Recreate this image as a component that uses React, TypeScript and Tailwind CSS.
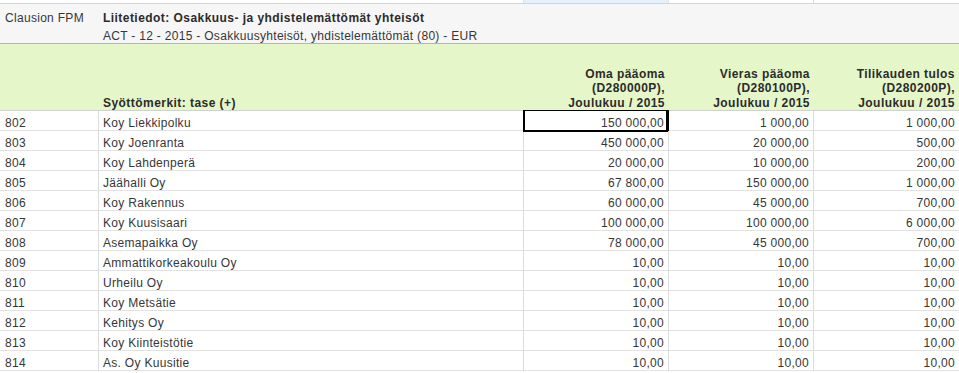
const rows: [string, string, string, string, string][] = [
  ["802", "Koy Liekkipolku", "150 000,00", "1 000,00", "1 000,00"],
  ["803", "Koy Joenranta", "450 000,00", "20 000,00", "500,00"],
  ["804", "Koy Lahdenperä", "20 000,00", "10 000,00", "200,00"],
  ["805", "Jäähalli Oy", "67 800,00", "150 000,00", "1 000,00"],
  ["806", "Koy Rakennus", "60 000,00", "45 000,00", "700,00"],
  ["807", "Koy Kuusisaari", "100 000,00", "100 000,00", "6 000,00"],
  ["808", "Asemapaikka Oy", "78 000,00", "45 000,00", "700,00"],
  ["809", "Ammattikorkeakoulu Oy", "10,00", "10,00", "10,00"],
  ["810", "Urheilu Oy", "10,00", "10,00", "10,00"],
  ["811", "Koy Metsätie", "10,00", "10,00", "10,00"],
  ["812", "Kehitys Oy", "10,00", "10,00", "10,00"],
  ["813", "Koy Kiinteistötie", "10,00", "10,00", "10,00"],
  ["814", "As. Oy Kuusitie", "10,00", "10,00", "10,00"],
];

const cols = [
  ["Oma pääoma", "(D280000P),", "Joulukuu / 2015"],
  ["Vieras pääoma", "(D280100P),", "Joulukuu / 2015"],
  ["Tilikauden tulos", "(D280200P),", "Joulukuu / 2015"],
];

const grid = "grid grid-cols-[99px_425px_145px_145px_145px]";

export default function App() {
  return (
    <div
      className="w-[959px] h-[373px] overflow-hidden bg-white text-[12px] text-[#363636] tracking-[0.3px]"
      style={{ fontFamily: '"Liberation Sans", Arial, sans-serif' }}
    >
      {/* strip of the row above */}
      <div className={`${grid} h-[4px] border-b border-[#d4d4d4]`}>
        <div />
        <div className="border-r border-[#e2e2e2]" />
        <div className="bg-[#e4f2fb] border-r border-[#e2e2e2]" />
        <div className="border-r border-[#d8d8d8]" />
        <div />
      </div>

      {/* title block */}
      <div className={`${grid} h-[40px] bg-[#f6f6f6] pt-[5px] border-b border-[#b4b4b4]`}>
        <div className="pl-[5px] leading-[19px]">Clausion FPM</div>
        <div className="col-span-4 pl-[4px]">
          <div className="font-bold leading-[19px] text-[#2b2b2b] tracking-[0.45px]">
            Liitetiedot: Osakkuus- ja yhdistelemättömät yhteisöt
          </div>
          <div className="leading-[16px]">
            ACT - 12 - 2015 - Osakkuusyhteisöt, yhdistelemättömät (80) - EUR
          </div>
        </div>
      </div>

      {/* column headers */}
      <div className={`${grid} h-[67px] bg-[#e5f6c9] border-b border-[#d0d0d0] font-bold text-[#2b2b2b] leading-[14.5px] tracking-[0.45px]`}>
        <div />
        <div className="flex items-end pl-[4px]">Syöttömerkit: tase (+)</div>
        {cols.map((c) => (
          <div key={c[0]} className="flex flex-col items-end justify-end pr-[4px] text-right">
            {c.map((l) => (
              <div key={l}>{l}</div>
            ))}
          </div>
        ))}
      </div>

      {/* data */}
      {rows.map((r, i) => (
        <div key={r[0]} className={`${grid} h-[20px] border-b border-[#e2e2e2] leading-[16px]`}>
          <div className="pl-[5px] pt-[4px] border-r border-[#dcdcdc]">{r[0]}</div>
          <div className="pl-[4px] pt-[4px] border-r border-[#dcdcdc]">{r[1]}</div>
          <div className="relative pr-[4px] pt-[4px] text-right border-r border-[#dcdcdc]">
            {r[2]}
            {i === 0 && (
              <div className="absolute -left-px -top-px right-[-1px] bottom-[-1px] border-t border-l-2 border-r-[3px] border-b-2 border-black" />
            )}
          </div>
          <div className="pr-[4px] pt-[4px] text-right border-r border-[#dcdcdc]">{r[3]}</div>
          <div className="pr-[4px] pt-[4px] text-right">{r[4]}</div>
        </div>
      ))}
    </div>
  );
}
